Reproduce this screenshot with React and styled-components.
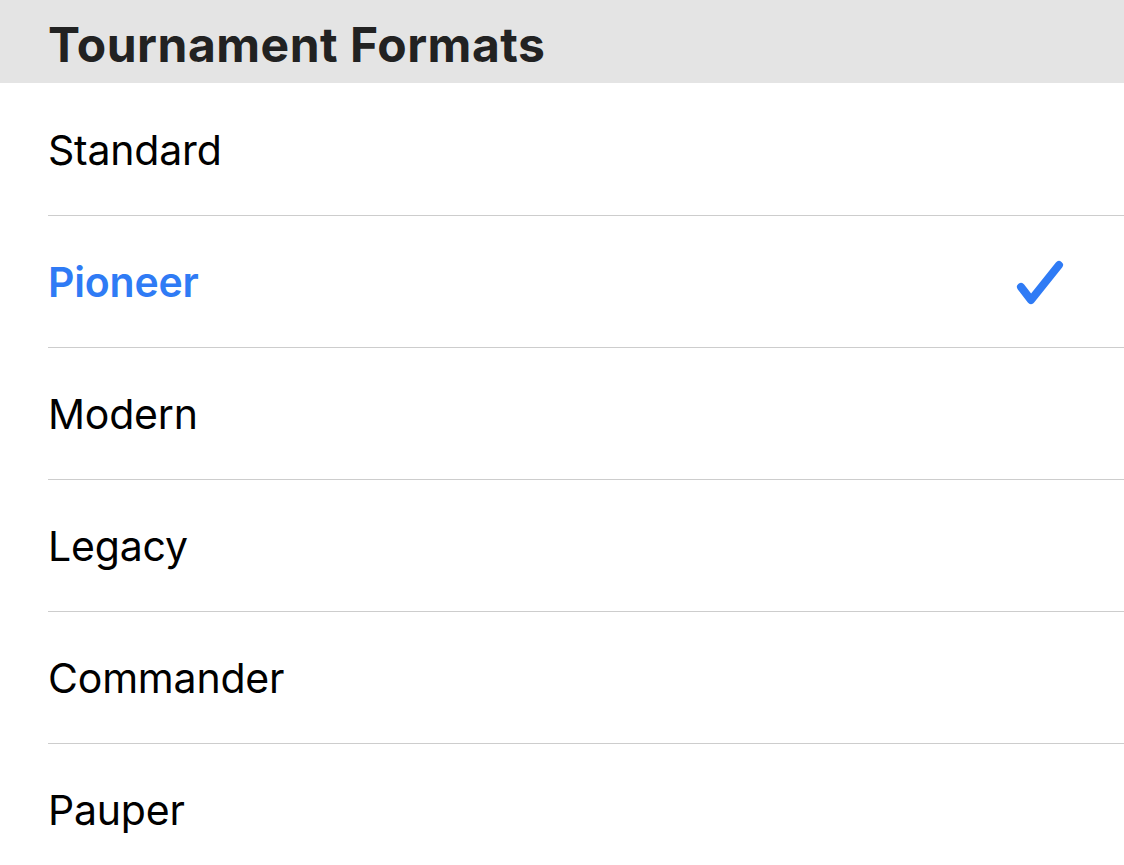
import React from "react"
import styled, { createGlobalStyle } from "styled-components"

const GlobalStyle = createGlobalStyle`
  body {
    margin: 0;
    background: #ffffff;
    font-family: Inter, "Noto Sans", sans-serif;
  }
`

const Page = styled.div`
  width: 1124px;
  height: 865px;
  overflow: hidden;
  background: #ffffff;
`

const SectionHeader = styled.header`
  background: #e4e4e4;
  height: 83px;
  box-sizing: border-box;
  padding: 6px 0 0 48px;
  display: flex;
  align-items: center;
`

const SectionTitle = styled.h2`
  margin: 0;
  font-size: 48px;
  font-weight: 700;
  color: #222222;
  letter-spacing: 0.5px;
`

const List = styled.ul`
  list-style: none;
  margin: 0;
  padding: 1px 0 0 48px;
`

const Row = styled.li`
  height: 132px;
  display: flex;
  align-items: center;
  justify-content: space-between;
  padding-right: 60px;
  box-sizing: border-box;
  border-bottom: 1px solid #cdcdcd;
`

const Label = styled.span`
  font-size: 41px;
  font-weight: ${(p) => (p.selected ? 600 : 400)};
  color: ${(p) => (p.selected ? "#2f7bf5" : "#000000")};
  letter-spacing: -0.2px;
`

const Check = () => (
  <svg width="50" height="46" viewBox="0 0 50 46">
    <path
      d="M7 28 L17 41 L45 6"
      fill="none"
      stroke="#2f7bf5"
      strokeWidth="8"
      strokeLinecap="round"
      strokeLinejoin="round"
    />
  </svg>
)

const formats = ["Standard", "Pioneer", "Modern", "Legacy", "Commander", "Pauper"]

const App = () => (
  <Page>
    <GlobalStyle />
    <SectionHeader>
      <SectionTitle>Tournament Formats</SectionTitle>
    </SectionHeader>
    <List>
      {formats.map((name) => (
        <Row key={name}>
          <Label selected={name === "Pioneer"}>{name}</Label>
          {name === "Pioneer" && <Check />}
        </Row>
      ))}
    </List>
  </Page>
)

export default App
